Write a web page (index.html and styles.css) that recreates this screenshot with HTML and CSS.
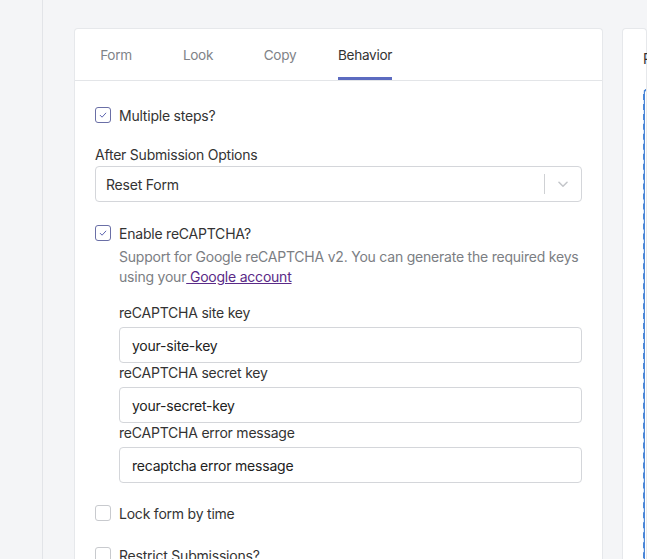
FILE: index.html
```html
<!DOCTYPE html>
<html lang="en">
<head>
    <meta charset="UTF-8">
    <meta name="viewport" content="width=device-width, initial-scale=1.0">
    <title>Form Settings</title>
    <link rel="stylesheet" href="styles.css">
</head>
<body>
    <div class="layout">
        <aside class="sidebar"></aside>
        <main class="main">
            <section class="card editor">
                <nav class="tabs">
                    <div class="tab">Form</div>
                    <div class="tab">Look</div>
                    <div class="tab">Copy</div>
                    <div class="tab active"><span>Behavior</span></div>
                </nav>
                <div class="panel">
                    <label class="check-row">
                        <span class="box checked">
                            <svg viewBox="0 0 16 16" width="10" height="10"><path d="M3.5 8.5l3 3 6-6.5" fill="none" stroke="currentColor" stroke-width="1.6" stroke-linecap="round" stroke-linejoin="round"/></svg>
                        </span>
                        Multiple steps?
                    </label>

                    <div class="group">
                        <div class="label">After Submission Options</div>
                        <div class="select">
                            <span class="select-value">Reset Form</span>
                            <span class="select-sep"></span>
                            <span class="select-arrow">
                                <svg viewBox="0 0 20 20" width="18" height="18"><path d="M5.5 8l4.5 4.5L14.5 8" fill="none" stroke="currentColor" stroke-width="1.7" stroke-linecap="round" stroke-linejoin="round"/></svg>
                            </span>
                        </div>
                    </div>

                    <label class="check-row">
                        <span class="box checked">
                            <svg viewBox="0 0 16 16" width="10" height="10"><path d="M3.5 8.5l3 3 6-6.5" fill="none" stroke="currentColor" stroke-width="1.6" stroke-linecap="round" stroke-linejoin="round"/></svg>
                        </span>
                        Enable reCAPTCHA?
                    </label>
                    <div class="nested">
                        <p class="help">Support for Google reCAPTCHA v2. You can generate the required keys using your<a href="#"> Google account</a></p>
                        <div class="field">
                            <div class="label">reCAPTCHA site key</div>
                            <div class="input">your-site-key</div>
                        </div>
                        <div class="field">
                            <div class="label">reCAPTCHA secret key</div>
                            <div class="input">your-secret-key</div>
                        </div>
                        <div class="field">
                            <div class="label">reCAPTCHA error message</div>
                            <div class="input">recaptcha error message</div>
                        </div>
                    </div>

                    <label class="check-row">
                        <span class="box"></span>
                        Lock form by time
                    </label>
                    <label class="check-row">
                        <span class="box"></span>
                        Restrict Submissions?
                    </label>
                </div>
            </section>
            <section class="card preview">
                <div class="preview-title">Preview</div>
                <div class="preview-frame"></div>
            </section>
        </main>
    </div>
</body>
</html>
```

FILE: styles.css
```css
body {
    margin: 0;
    padding: 0;
    font-family: Inter, "Noto Sans", sans-serif;
    font-size: 14px;
    letter-spacing: -0.22px;
    color: #333;
    background-color: #f4f5f7;
    overflow: hidden;
}

.layout {
    display: flex;
    height: 559px;
}

.sidebar {
    width: 42px;
    flex-shrink: 0;
    border-right: 1px solid #e2e4e8;
    background-color: #f4f5f7;
}

.main {
    display: flex;
    gap: 19px;
    padding: 28px 0 0 31px;
    flex: 1;
    min-width: 0;
}

.card {
    background-color: #fff;
    border: 1px solid #e6e8eb;
    border-bottom: none;
    border-radius: 4px 4px 0 0;
}

.editor {
    width: 527px;
    flex-shrink: 0;
}

.tabs {
    display: flex;
    height: 51px;
    border-bottom: 1px solid #e3e5e8;
}

.tab {
    min-width: 82px;
    padding: 0 17px;
    box-sizing: border-box;
    display: flex;
    justify-content: center;
    align-items: center;
    font-size: 13.6px;
    letter-spacing: -0.3px;
    color: #808388;
    cursor: pointer;
}

.tab.active {
    color: #333;
    align-items: stretch;
}

.tab.active span {
    display: flex;
    align-items: center;
    border-bottom: 3px solid #5c6bc0;
    padding-top: 3px;
}

.panel {
    padding: 23px 20px 0 20px;
}

.check-row {
    display: flex;
    align-items: center;
    gap: 8px;
    height: 22px;
    margin-bottom: 19px;
    color: #333;
}

.check-row:last-child {
    margin-top: 20px;
}

.box {
    width: 14px;
    height: 14px;
    border: 1px solid #c8cace;
    border-radius: 3px;
    display: flex;
    align-items: center;
    justify-content: center;
    flex-shrink: 0;
}

.box.checked {
    border-color: #6a6fa6;
    color: #5c64b0;
}

.group {
    margin-bottom: 20px;
}

.label {
    line-height: 20px;
    margin-bottom: 1px;
    color: #333;
}

.select {
    display: flex;
    align-items: center;
    height: 36px;
    border: 1px solid #d4d6da;
    border-radius: 4px;
    box-sizing: border-box;
}

.select-value {
    flex: 1;
    padding-left: 10px;
}

.select-sep {
    width: 1px;
    height: 20px;
    background-color: #cfd1d4;
}

.select-arrow {
    width: 36px;
    display: flex;
    justify-content: center;
    color: #c4c6ca;
}

.nested {
    padding-left: 24px;
    margin-top: -16px;
    margin-bottom: 19px;
}

.help {
    margin: 0 0 16px 0;
    line-height: 20px;
    color: #7b7e83;
}

.help a {
    color: #5a2a87;
}

.field .label {
    margin-bottom: 4px;
}

.input {
    height: 36px;
    box-sizing: border-box;
    border: 1px solid #d4d6da;
    border-radius: 4px;
    padding: 0 12px;
    display: flex;
    align-items: center;
    color: #222;
}

.preview {
    flex: 1;
    min-width: 0;
    padding: 20px 0 0 20px;
}

.preview-title {
    line-height: 20px;
    white-space: nowrap;
    margin-bottom: 20px;
}

.preview-frame {
    height: 500px;
    border: 2px dashed #4a86d8;
    border-right: none;
    border-radius: 6px 0 0 0;
}
```
